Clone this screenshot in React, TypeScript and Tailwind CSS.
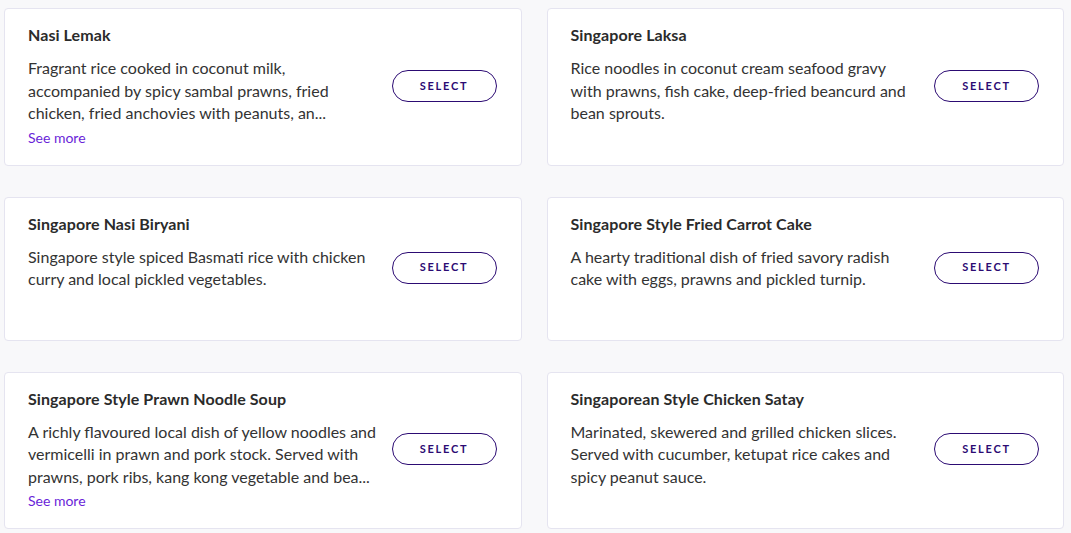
import React from "react";

interface Dish {
  name: string;
  lines: string[];
  truncated?: boolean;
}

// descriptions are split by line so the wrap matches the original layout
const dishes: Dish[] = [
  {
    name: "Nasi Lemak",
    lines: [
      "Fragrant rice cooked in coconut milk,",
      "accompanied by spicy sambal prawns, fried",
      "chicken, fried anchovies with peanuts, an...",
    ],
    truncated: true,
  },
  {
    name: "Singapore Laksa",
    lines: [
      "Rice noodles in coconut cream seafood gravy",
      "with prawns, fish cake, deep-fried beancurd and",
      "bean sprouts.",
    ],
  },
  {
    name: "Singapore Nasi Biryani",
    lines: [
      "Singapore style spiced Basmati rice with chicken",
      "curry and local pickled vegetables.",
    ],
  },
  {
    name: "Singapore Style Fried Carrot Cake",
    lines: [
      "A hearty traditional dish of fried savory radish",
      "cake with eggs, prawns and pickled turnip.",
    ],
  },
  {
    name: "Singapore Style Prawn Noodle Soup",
    lines: [
      "A richly flavoured local dish of yellow noodles and",
      "vermicelli in prawn and pork stock. Served with",
      "prawns, pork ribs, kang kong vegetable and bea...",
    ],
    truncated: true,
  },
  {
    name: "Singaporean Style Chicken Satay",
    lines: [
      "Marinated, skewered and grilled chicken slices.",
      "Served with cucumber, ketupat rice cakes and",
      "spicy peanut sauce.",
    ],
  },
];

const DishCard: React.FC<{ dish: Dish }> = ({ dish }) => {
  return (
    <div className="flex min-h-[144px] items-center gap-6 rounded-[4px] border border-[#e5e4f0] bg-white pb-[17px] pl-[23px] pr-6 pt-[15px]">
      <div className="flex min-w-0 flex-1 flex-col self-start">
        <h3 className="text-[16px] font-bold leading-[22px] tracking-[0.005em] text-[#2b2b2b]">
          {dish.name}
        </h3>
        <p className="mt-[11px] text-[16px] leading-[22.5px] text-[#333333]">
          {dish.lines.map((line, i) => (
            <span key={i} className="block whitespace-nowrap">
              {line}
            </span>
          ))}
        </p>
        {dish.truncated && (
          <button className="mt-[3px] self-start text-[14px] leading-[20px] text-[#6a1fd8]">
            See more
          </button>
        )}
      </div>
      <button className="h-8 w-[105px] shrink-0 rounded-full border border-[#2c0b73] text-[11px] font-bold tracking-[0.16em] text-[#2c0b73]">
        SELECT
      </button>
    </div>
  );
};

export default function App() {
  return (
    <div
      className="min-h-[533px] bg-[#f8f8fa] pb-4 pl-[4px] pr-[7px] pt-[8px]"
      style={{ fontFamily: "Lato, 'Open Sans', sans-serif" }}
    >
      <div className="grid grid-cols-2 gap-x-[25px] gap-y-[31px]">
        {dishes.map((dish) => (
          <DishCard key={dish.name} dish={dish} />
        ))}
      </div>
    </div>
  );
}
